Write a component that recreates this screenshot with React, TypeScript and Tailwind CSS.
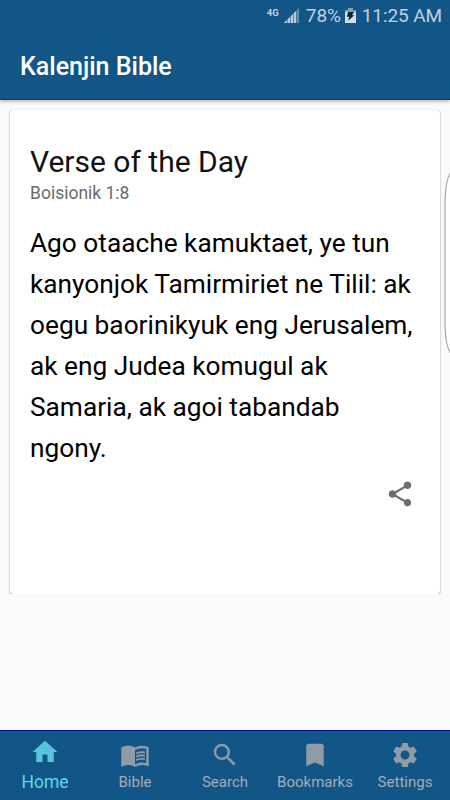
import { MdBookmark, MdMenuBook, MdSearch, MdSettings, MdShare } from "react-icons/md";
import type { ReactNode } from "react";

const verseLines = [
  "Ago otaache kamuktaet, ye tun",
  "kanyonjok Tamirmiriet ne Tilil: ak",
  "oegu baorinikyuk eng Jerusalem,",
  "ak eng Judea komugul ak",
  "Samaria, ak agoi tabandab",
  "ngony.",
];

const HomeIcon = () => (
  <svg width="30" height="30" viewBox="0 0 24 24" fill="currentColor">
    <path d="M10 20v-6h4v6h5v-8h3L12 3 2 12h3v8z" />
  </svg>
);

const SignalIcon = () => (
  <svg className="ml-[5px] mt-[8px]" width="16" height="15" viewBox="0 0 16 15">
    <path d="M0 15L15 0v15z" fill="#5f8cb0" />
    <path d="M0 15L12 3v12z" fill="#b9cbdc" />
    <path d="M3.5 11v4M6.5 8v7M9.5 5v10M12.5 2v13" stroke="#3d739f" strokeWidth="0.8" />
  </svg>
);

const BatteryIcon = () => (
  <svg className="ml-[4px] mt-[8px]" width="11" height="15" viewBox="0 0 11 15">
    <path d="M3 0h5v2h3v13H0V2h3z" fill="#d3deea" />
    <path d="M3 0h5v2h3v2H0V2h3z" fill="#7f9fbb" />
    <path d="M3.2 4H9L7 7.2h2.4L3 12.8l1.3-4H1.8z" fill="#0d2135" />
  </svg>
);

const StatusBar = () => (
  <div className="flex h-[33px] items-start justify-end pr-[8px] text-[#c0d0e1]">
    <span className="mt-[7px] text-[9.5px] leading-[11px] font-bold">4G</span>
    <SignalIcon />
    <span className="ml-[6px] text-[19px] leading-[32px] tracking-[-0.1px]">78%</span>
    <BatteryIcon />
    <span className="ml-[6px] text-[19px] leading-[32px] tracking-[-0.1px]">11:25 AM</span>
  </div>
);

interface TabProps {
  icon: ReactNode;
  label: string;
  active?: boolean;
}

const Tab = ({ icon, label, active }: TabProps) => (
  <div
    className={
      active
        ? "flex flex-1 flex-col items-center pt-[6px] text-[#56c5dc]"
        : "flex flex-1 flex-col items-center pt-[9px] text-[#8f9ba6]"
    }
  >
    {icon}
    <span
      className={
        active
          ? "mt-[5px] text-[17.5px] leading-[20px] text-[#58dbe8]"
          : "mt-[2px] text-[15px] leading-[20px] text-[#a6abb5]"
      }
    >
      {label}
    </span>
  </div>
);

export default function App() {
  return (
    <div className="flex h-[800px] w-[450px] flex-col overflow-hidden bg-[#fafafa] font-['Roboto',sans-serif]">
      <header className="relative h-[100px] shrink-0 border-b border-[#093a79] bg-[#125687] shadow-[0_1px_4px_rgba(0,0,0,0.35)]">
        <StatusBar />
        <h1 className="pl-[20px] text-[25px] leading-[68px] font-medium text-white">Kalenjin Bible</h1>
      </header>

      <main className="relative flex-1 px-[10px]">
        {/* The bottom shadow of the card is clipped by its list */}
        <div className="-mx-[10px] h-[494px] overflow-hidden px-[10px] pt-[10px]">
          <section className="h-[484px] rounded-[3px] bg-white px-[20px] pt-[34px] shadow-[0_0_1px_rgba(0,0,0,0.3),0_1px_2px_rgba(0,0,0,0.35)]">
            <h2 className="text-[30px] leading-[36px] text-[#111]">Verse of the Day</h2>
            <p className="mt-[3px] text-[17.5px] leading-[20px] text-[#6b6b6b]">Boisionik 1:8</p>
            <div className="mt-[20px] text-[26.25px] leading-[41px] whitespace-nowrap text-black">
              {verseLines.map((line) => (
                <p key={line}>{line}</p>
              ))}
            </div>
            <div className="mt-[10px] flex justify-end pr-[5px] text-[#6d6d6d]">
              <MdShare size={30} />
            </div>
          </section>
        </div>

        {/* Edge panel handle */}
        <svg className="absolute top-[70px] right-0" width="6" height="186" viewBox="0 0 6 186">
          <path d="M7 2C3 8 1 18 1 34v118c0 16 2 26 6 32z" fill="#fff" />
          <path d="M7 2C3 8 1 18 1 34v118c0 16 2 26 6 32" fill="none" stroke="#8a8a8a" strokeWidth="0.9" />
        </svg>
      </main>

      <nav className="flex h-[70px] shrink-0 border-t border-[#00128a] bg-[#125687]">
        <Tab icon={<HomeIcon />} label="Home" active />
        <Tab icon={<MdMenuBook size={30} />} label="Bible" />
        <Tab icon={<MdSearch size={30} />} label="Search" />
        <Tab icon={<MdBookmark size={30} />} label="Bookmarks" />
        <Tab icon={<MdSettings size={30} />} label="Settings" />
      </nav>
    </div>
  );
}
